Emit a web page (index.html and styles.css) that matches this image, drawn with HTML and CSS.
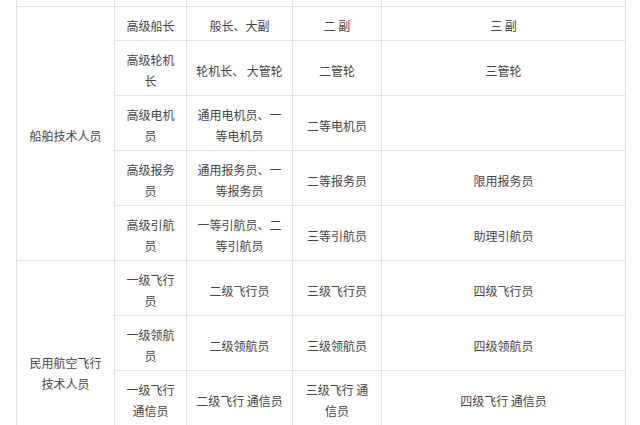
FILE: index.html
```html
<!DOCTYPE html>
<html lang="zh">
<head>
<meta charset="utf-8">
<link rel="stylesheet" href="styles.css">
</head>
<body>
<table class="grid">
  <colgroup>
    <col class="c1"><col class="c2"><col class="c3"><col class="c4"><col class="c5">
  </colgroup>
  <tbody>
    <tr class="cut">
      <td class="first"></td><td></td><td></td><td></td><td></td>
    </tr>
    <tr>
      <td class="first" rowspan="5">船舶技术人员</td>
      <td>高级船长</td><td>般长、大副</td><td>二 副</td><td>三 副</td>
    </tr>
    <tr>
      <td>高级轮机长</td><td>轮机长、 大管轮</td><td>二管轮</td><td>三管轮</td>
    </tr>
    <tr>
      <td>高级电机员</td><td>通用电机员、一等电机员</td><td>二等电机员</td><td></td>
    </tr>
    <tr>
      <td>高级报务员</td><td>通用报务员、一等报务员</td><td>二等报务员</td><td>限用报务员</td>
    </tr>
    <tr>
      <td>高级引航员</td><td>一等引航员、二等引航员</td><td>三等引航员</td><td>助理引航员</td>
    </tr>
    <tr>
      <td class="first" rowspan="4">民用航空飞行技术人员</td>
      <td>一级飞行员</td><td>二级飞行员</td><td>三级飞行员</td><td>四级飞行员</td>
    </tr>
    <tr>
      <td>一级领航员</td><td>二级领航员</td><td>三级领航员</td><td>四级领航员</td>
    </tr>
    <tr>
      <td>一级飞行通信员</td><td>二级飞行 通信员</td><td>三级飞行 通信员</td><td>四级飞行 通信员</td>
    </tr>
    <tr>
      <td>一级飞行机械员</td><td>二级飞行机械员</td><td>三级飞行机械员</td><td>四级飞行机械员</td>
    </tr>
  </tbody>
</table>
</body>
</html>
```

FILE: styles.css
```css
html, body {
  margin: 0;
  padding: 0;
  background: #ffffff;
}

body {
  font-family: "Noto Sans CJK SC", "Noto Sans", sans-serif;
  font-size: 12px;
  color: #454545;
}

.grid {
  margin-left: 16px;
  border-collapse: separate;
  border-spacing: 0;
  table-layout: fixed;
  width: 610px;
}

.c1 { width: 99px; }
.c2 { width: 72px; }
.c3 { width: 106px; }
.c4 { width: 89px; }
.c5 { width: 244px; }

.grid td {
  border-right: 1px solid #e2e2e2;
  border-bottom: 1px solid #e2e2e2;
  padding: 8px 8px 4px;
  line-height: 21px;
  text-align: center;
  vertical-align: middle;
  word-break: break-all;
}

.grid td.first {
  border-left: 1px solid #e2e2e2;
}

.grid .cut td {
  padding: 0;
  height: 6px;
  line-height: 0;
}
```
